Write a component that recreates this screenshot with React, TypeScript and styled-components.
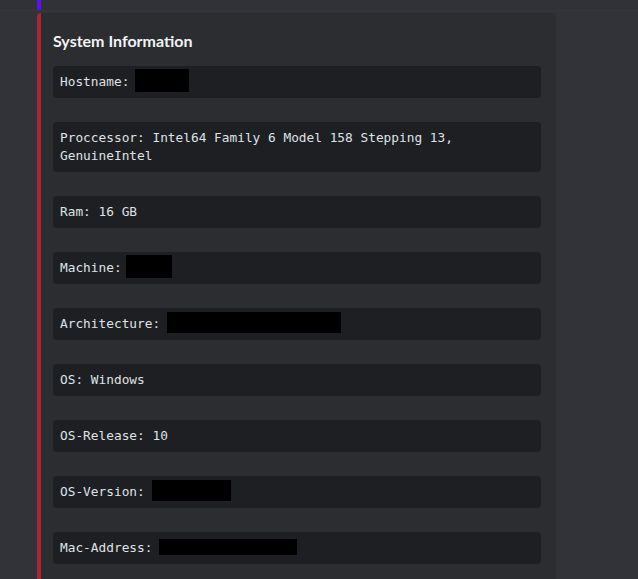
import React from "react";
import styled, { createGlobalStyle } from "styled-components";

const Global = createGlobalStyle`
  html, body {
    margin: 0;
    padding: 0;
    background: #313338;
  }
  body {
    width: 638px;
    height: 579px;
    overflow: hidden;
  }
`;

const Page = styled.div`
  width: 638px;
  height: 579px;
  overflow: hidden;
  background: #313338;
  display: flex;
  flex-direction: column;
`;

const PrevMessage = styled.div`
  height: 11px;
  padding-left: 37px;
  border-bottom: 1px solid #34363b;
  background: #303237;
`;

const PrevStripe = styled.div`
  width: 4px;
  height: 10px;
  background: #5c10f0;
`;

const Message = styled.div`
  padding: 2px 0 0 37px;
`;

const Embed = styled.div`
  width: 519px;
  background: #2b2d31;
  border-left: 4px solid #ab2530;
  border-radius: 4px 0 0 4px;
  padding: 17px 15px 16px 12px;
  box-sizing: border-box;
  display: flex;
  flex-direction: column;
  min-height: 600px;
`;

const Title = styled.div`
  font-family: Lato, "Noto Sans", sans-serif;
  font-weight: 700;
  font-size: 16px;
  line-height: 22px;
  color: #f2f3f5;
  margin-bottom: 14px;
`;

const Fields = styled.div`
  display: flex;
  flex-direction: column;
  gap: 24px;
`;

const CodeBox = styled.div`
  background: #1e1f22;
  border-radius: 4px;
  padding: 7px;
  font-family: "DejaVu Sans Mono", "Liberation Mono", monospace;
  font-size: 12.8px;
  line-height: 18px;
  color: #dfe2e6;
  white-space: pre-wrap;
  word-break: normal;
`;

const Redact = styled.span<{ $w: number; $h: number; $dx: number }>`
  display: inline-block;
  width: ${(p) => p.$w}px;
  height: ${(p) => p.$h}px;
  background: #000;
  vertical-align: middle;
  margin: ${(p) => (14 - p.$h) / 2}px 0 ${(p) => (14 - p.$h) / 2}px ${(p) => p.$dx}px;
  position: relative;
  top: -2px;
`;

type Field = {
  label: string;
  value?: string;
  redact?: { w: number; h: number; dx: number };
};

const fields: Field[] = [
  { label: "Hostname:", redact: { w: 54, h: 23, dx: -2 } },
  { label: "Proccessor:", value: "Intel64 Family 6 Model 158 Stepping 13, GenuineIntel" },
  { label: "Ram:", value: "16 GB" },
  { label: "Machine:", redact: { w: 46, h: 23, dx: -3 } },
  { label: "Architecture:", redact: { w: 174, h: 21, dx: -1 } },
  { label: "OS:", value: "Windows" },
  { label: "OS-Release:", value: "10" },
  { label: "OS-Version:", redact: { w: 79, h: 21, dx: 0 } },
  { label: "Mac-Address:", redact: { w: 138, h: 16, dx: -1 } },
];

export default function App() {
  return (
    <>
      <Global />
      <Page>
        <PrevMessage>
          <PrevStripe />
        </PrevMessage>
        <Message>
          <Embed>
            <Title>System Information</Title>
            <Fields>
              {fields.map((f) => (
                <CodeBox key={f.label}>
                  {f.label + " "}
                  {f.value}
                  {f.redact && <Redact $w={f.redact.w} $h={f.redact.h} $dx={f.redact.dx} />}
                </CodeBox>
              ))}
            </Fields>
          </Embed>
        </Message>
      </Page>
    </>
  );
}
